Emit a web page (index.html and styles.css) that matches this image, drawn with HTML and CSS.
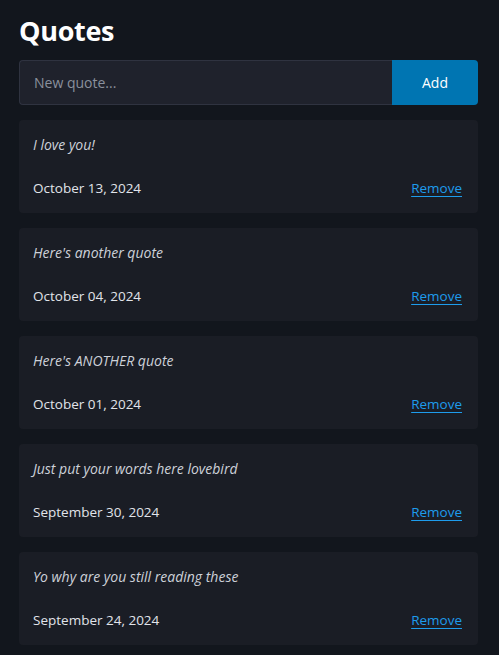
FILE: index.html
```html
<!DOCTYPE html>
<html lang="en">
<head>
<meta charset="utf-8">
<title>Quotes</title>
<link rel="stylesheet" href="styles.css">
</head>
<body>
<main class="page">
  <h1 class="title">Quotes</h1>
  <form class="new-quote">
    <input class="new-quote__input" type="text" placeholder="New quote...">
    <button class="new-quote__btn" type="button">Add</button>
  </form>
  <ul class="quotes">
    <li class="quote">
      <p class="quote__text">I love you!</p>
      <div class="quote__meta"><span class="quote__date">October 13, 2024</span><a class="quote__remove" href="#">Remove</a></div>
    </li>
    <li class="quote">
      <p class="quote__text">Here's another quote</p>
      <div class="quote__meta"><span class="quote__date">October 04, 2024</span><a class="quote__remove" href="#">Remove</a></div>
    </li>
    <li class="quote">
      <p class="quote__text">Here's ANOTHER quote</p>
      <div class="quote__meta"><span class="quote__date">October 01, 2024</span><a class="quote__remove" href="#">Remove</a></div>
    </li>
    <li class="quote">
      <p class="quote__text">Just put your words here lovebird</p>
      <div class="quote__meta"><span class="quote__date">September 30, 2024</span><a class="quote__remove" href="#">Remove</a></div>
    </li>
    <li class="quote">
      <p class="quote__text">Yo why are you still reading these</p>
      <div class="quote__meta"><span class="quote__date">September 24, 2024</span><a class="quote__remove" href="#">Remove</a></div>
    </li>
  </ul>
</main>
</body>
</html>
```
FILE: styles.css
```css
html, body {
  margin: 0;
  background: #12161d;
  color: #e1e4ea;
  font-family: "Open Sans", "Noto Sans", sans-serif;
}
.page {
  padding: 14px 21px 20px 19px;
}
.title {
  margin: 0 0 12px;
  font-size: 27px;
  line-height: 34px;
  font-weight: 700;
  color: #ffffff;
  letter-spacing: -0.3px;
}
.new-quote {
  display: flex;
  height: 45px;
  margin: 0 0 15px;
}
.new-quote__input {
  flex: 1;
  min-width: 0;
  box-sizing: border-box;
  background: #1f222c;
  border: 1px solid #2f3340;
  border-right: none;
  border-radius: 4px 0 0 4px;
  padding: 0 14px;
  font-family: inherit;
  font-size: 14px;
  color: #e1e4ea;
  outline: none;
}
.new-quote__input::placeholder {
  color: #8a909c;
}
.new-quote__btn {
  width: 86px;
  background: #0075b2;
  border: none;
  border-radius: 0 4px 4px 0;
  color: #ffffff;
  font-family: inherit;
  font-size: 14px;
  font-weight: 500;
}
.quotes {
  list-style: none;
  margin: 0;
  padding: 0;
  display: flex;
  flex-direction: column;
  gap: 15px;
}
.quote {
  background: #1a1d25;
  border-radius: 4px;
  padding: 15px 16px 15px 14px;
}
.quote__text {
  margin: 0 0 23px;
  font-style: italic;
  font-size: 14px;
  line-height: 20px;
  color: #cdd1d9;
}
.quote__meta {
  display: flex;
  justify-content: space-between;
  align-items: center;
  font-size: 13.5px;
  line-height: 20px;
}
.quote__date {
  color: #e1e4ea;
}
.quote__remove {
  color: #1e9cec;
  text-decoration: underline;
  text-underline-offset: 3px;
}
```
